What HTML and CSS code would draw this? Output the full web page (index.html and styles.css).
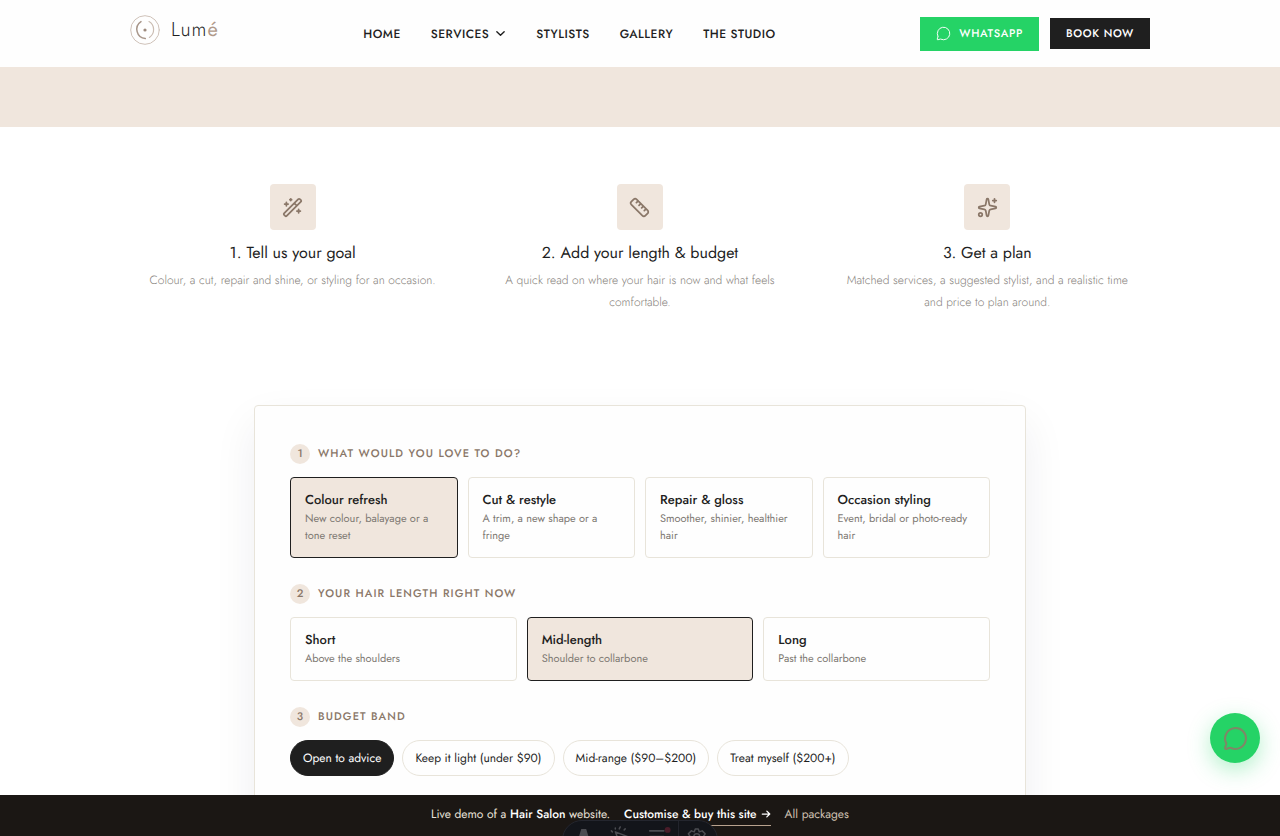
FILE: index.html
```html
<!DOCTYPE html>
<html lang="en">
<head>
<meta charset="utf-8">
<meta name="viewport" content="width=device-width, initial-scale=1">
<title>Lumé</title>
<link rel="stylesheet" href="styles.css">
</head>
<body>
<div class="shell">
  <header class="site-header">
    <div class="container header-row">
      <a class="logo" href="#">
        <svg class="logo-mark" viewBox="0 0 30 30" aria-hidden="true">
          <circle class="ring" cx="15" cy="15" r="14.3"/>
          <path class="arc-left" d="M11 6.6A9.3 9.3 0 0 0 15.3 23.6"/>
          <path class="arc-right" d="M19 6.6A9.3 9.3 0 0 1 19.4 22.4"/>
          <circle class="dot" cx="15" cy="15" r="1.6"/>
        </svg>
        <span class="logo-text">Lum<span class="accent">é</span></span>
      </a>
      <nav class="nav">
        <a href="#">HOME</a>
        <a href="#">SERVICES <svg class="chevron" viewBox="0 0 24 24" aria-hidden="true"><path d="m4 8 8 8 8-8"/></svg></a>
        <a href="#">STYLISTS</a>
        <a href="#">GALLERY</a>
        <a href="#">THE STUDIO</a>
      </nav>
      <div class="actions">
        <a class="btn btn-whatsapp" href="#"><svg class="icon-sm" viewBox="0 0 24 24" aria-hidden="true"><path d="M2.992 16.342a2 2 0 0 1 .094 1.167l-1.065 3.29a1 1 0 0 0 1.236 1.168l3.413-.998a2 2 0 0 1 1.099.092 10 10 0 1 0-4.777-4.719"/></svg>WHATSAPP</a>
        <a class="btn btn-book" href="#">BOOK NOW</a>
      </div>
    </div>
  </header>

  <main class="main">
    <div class="band"></div>
    <section class="container steps">
      <article class="step">
        <div class="step-icon"><svg viewBox="0 0 24 24" aria-hidden="true"><path d="m21.64 3.64-1.28-1.28a1.21 1.21 0 0 0-1.72 0L2.36 18.64a1.21 1.21 0 0 0 0 1.72l1.28 1.28a1.2 1.2 0 0 0 1.72 0L21.64 5.36a1.2 1.2 0 0 0 0-1.72M14 7l3 3M5 6v4M19 14v4M10 2v2M7 8H3M21 16h-4M11 3H9"/></svg></div>
        <h2>1. Tell us your goal</h2>
        <p>Colour, a cut, repair and shine, or styling for an occasion.</p>
      </article>
      <article class="step">
        <div class="step-icon"><svg viewBox="0 0 24 24" aria-hidden="true"><path d="M21.3 15.3a2.4 2.4 0 0 1 0 3.4l-2.6 2.6a2.4 2.4 0 0 1-3.4 0L2.7 8.7a2.41 2.41 0 0 1 0-3.4l2.6-2.6a2.41 2.41 0 0 1 3.4 0ZM14.5 12.5l2-2M11.5 9.5l2-2M8.5 6.5l2-2M17.5 15.5l2-2"/></svg></div>
        <h2>2. Add your length &amp; budget</h2>
        <p>A quick read on where your hair is now and what feels comfortable.</p>
      </article>
      <article class="step">
        <div class="step-icon"><svg viewBox="0 0 24 24" aria-hidden="true"><path d="M11.017 2.814a1 1 0 0 1 1.966 0l1.051 5.558a2 2 0 0 0 1.594 1.594l5.558 1.051a1 1 0 0 1 0 1.966l-5.558 1.051a2 2 0 0 0-1.594 1.594l-1.051 5.558a1 1 0 0 1-1.966 0l-1.051-5.558a2 2 0 0 0-1.594-1.594l-5.558-1.051a1 1 0 0 1 0-1.966l5.558-1.051a2 2 0 0 0 1.594-1.594zM20 2v4M22 4h-4"/><circle cx="4" cy="20" r="2"/></svg></div>
        <h2>3. Get a plan</h2>
        <p>Matched services, a suggested stylist, and a realistic time and price to plan around.</p>
      </article>
    </section>

    <section class="card">
      <div class="group" role="group" aria-labelledby="q1">
        <h3 class="label" id="q1"><span class="num">1</span>WHAT WOULD YOU LOVE TO DO?</h3>
        <div class="options four">
          <button type="button" class="option selected" aria-pressed="true"><strong>Colour refresh</strong><span>New colour, balayage or a tone reset</span></button>
          <button type="button" class="option" aria-pressed="false"><strong>Cut &amp; restyle</strong><span>A trim, a new shape or a fringe</span></button>
          <button type="button" class="option" aria-pressed="false"><strong>Repair &amp; gloss</strong><span>Smoother, shinier, healthier hair</span></button>
          <button type="button" class="option" aria-pressed="false"><strong>Occasion styling</strong><span>Event, bridal or photo-ready hair</span></button>
        </div>
      </div>
      <div class="group" role="group" aria-labelledby="q2">
        <h3 class="label" id="q2"><span class="num">2</span>YOUR HAIR LENGTH RIGHT NOW</h3>
        <div class="options three">
          <button type="button" class="option" aria-pressed="false"><strong>Short</strong><span>Above the shoulders</span></button>
          <button type="button" class="option selected" aria-pressed="true"><strong>Mid-length</strong><span>Shoulder to collarbone</span></button>
          <button type="button" class="option" aria-pressed="false"><strong>Long</strong><span>Past the collarbone</span></button>
        </div>
      </div>
      <div class="group" role="group" aria-labelledby="q3">
        <h3 class="label" id="q3"><span class="num">3</span>BUDGET BAND</h3>
        <div class="chips">
          <button type="button" class="chip active" aria-pressed="true">Open to advice</button>
          <button type="button" class="chip" aria-pressed="false">Keep it light (under $90)</button>
          <button type="button" class="chip" aria-pressed="false">Mid-range ($90–$200)</button>
          <button type="button" class="chip" aria-pressed="false">Treat myself ($200+)</button>
        </div>
      </div>
    </section>
  </main>

  <footer class="demo-bar">
    <span>Live demo of a <b>Hair Salon</b> website.</span>
    <a class="buy" href="#">Customise &amp; buy this site <svg class="arrow" viewBox="0 0 24 24" aria-hidden="true"><path d="M3 12h18M14 5l7 7-7 7"/></svg></a>
    <a class="all" href="#">All packages</a>
  </footer>

  <a class="fab" href="#" aria-label="Chat on WhatsApp"><svg viewBox="0 0 24 24" aria-hidden="true"><path d="M2.992 16.342a2 2 0 0 1 .094 1.167l-1.065 3.29a1 1 0 0 0 1.236 1.168l3.413-.998a2 2 0 0 1 1.099.092 10 10 0 1 0-4.777-4.719"/></svg></a>

  <div class="dev-toolbar" aria-hidden="true">
    <svg viewBox="0 0 156 40">
      <path class="solid" d="M18.5 8h5l4.500 15-5-2h-4l-5 2z"/>
      <path d="M53 11l13 5-6 2-2 6zM53 8V7M57 8l1-2M62 9l1-1M50 11l-1-1"/>
      <path class="bars" d="M88 10h14M88 16h14"/>
      <circle class="alert" cx="106" cy="9" r="3"/>
      <path class="divider" d="M117 0v40"/>
      <path d="M130 10l-3 3 2 3M130 10l3 1 1-3h3l1 3 3-1 3 3-2 3"/>
      <circle cx="135.5" cy="16" r="3"/>
    </svg>
  </div>
</div>
</body>
</html>
```
FILE: styles.css
```css
:root {
  --ink: #1f1f1f;
  --taupe: #8a7768;
  --sand: #f0e6dd;
  --line: #e8e4da;
  --muted: #7d7872;
  --green: #25d366;
}

* { box-sizing: border-box; }

body {
  margin: 0;
  background: #fff;
  color: var(--ink);
  font-family: Jost, Lato, sans-serif;
  font-size: 12px;
  text-rendering: geometricPrecision;
}

a { color: inherit; text-decoration: none; }
h2, h3, p { margin: 0; }
button { font: inherit; color: inherit; text-rendering: inherit; cursor: pointer; }

svg {
  flex: none;
  fill: none;
  stroke: currentColor;
  stroke-width: 2;
  stroke-linecap: round;
  stroke-linejoin: round;
}

.shell {
  position: relative;
  display: flex;
  flex-direction: column;
  height: 100vh;
  overflow: hidden;
}

.container {
  width: calc(100% - 48px);
  max-width: 1020px;
  margin: 0 auto;
}

.site-header { flex: none; background: #fefefe; }

.header-row {
  display: flex;
  align-items: center;
  justify-content: space-between;
  height: 67px;
}

.logo {
  display: flex;
  align-items: center;
  gap: 11px;
  margin-bottom: 8px;
}
.logo-mark { width: 30px; height: 30px; }
.ring { stroke: #cfc2b9; stroke-width: 1; }
.arc-left { stroke: #a8968a; stroke-width: 1.5; }
.arc-right { stroke: #cbbdb3; stroke-width: 1.2; }
.dot { fill: #9d8a7d; stroke: none; }
.logo-text { font-size: 20px; font-weight: 300; letter-spacing: 1px; line-height: 24px; }
.accent { color: #b09a8b; font-weight: 400; }

.nav {
  display: flex;
  gap: 30px;
  font-weight: 500;
  letter-spacing: .04em;
}
.nav a { display: flex; align-items: center; gap: 6px; }
.chevron { width: 11px; height: 11px; stroke-width: 3; }

.actions { display: flex; align-items: center; gap: 11px; }

.btn {
  display: flex;
  align-items: center;
  gap: 8px;
  padding: 0 16px;
  color: #fff;
  font-size: 11px;
  font-weight: 500;
  letter-spacing: .06em;
}
.btn-whatsapp { height: 34px; background: var(--green); }
.btn-book { height: 31px; background: var(--ink); }
.icon-sm { width: 15px; height: 15px; stroke-width: 1.5; }

.main {
  flex: 1;
  min-height: 0;
  overflow-y: auto;
  scrollbar-width: none;
}

.band { height: 60px; background: var(--sand); }

.steps {
  display: grid;
  grid-template-columns: repeat(3, 1fr);
  gap: 22px;
  padding: 57px 0 92px;
  text-align: center;
}

.step-icon {
  display: grid;
  place-items: center;
  width: 46px;
  height: 46px;
  margin: 0 auto 12px;
  border-radius: 4px;
  background: var(--sand);
  color: var(--taupe);
}
.step-icon svg { width: 21px; height: 21px; }
.step h2 { margin-bottom: 3px; font-size: 16px; font-weight: 400; line-height: 24px; }
.step p { padding: 0 12px; color: #85807a; font-weight: 300; line-height: 22px; }

.card {
  display: flex;
  flex-direction: column;
  gap: 26px;
  width: calc(100% - 48px);
  max-width: 772px;
  margin: 0 auto;
  padding: 38px 35px 80px;
  border: 1px solid var(--line);
  border-radius: 4px;
  background: #fefefe;
  box-shadow: 0 18px 44px rgba(31, 31, 50, .07);
}

.label {
  display: flex;
  align-items: center;
  gap: 8px;
  margin-bottom: 13px;
  color: var(--taupe);
  font-size: 11px;
  font-weight: 500;
  line-height: 20px;
  letter-spacing: .1em;
}
.num {
  width: 20px;
  border-radius: 50%;
  background: var(--sand);
  letter-spacing: 0;
  text-align: center;
}

.options { display: grid; gap: 10px; }
.four { grid-template-columns: repeat(4, 1fr); }
.three { grid-template-columns: repeat(3, 1fr); }

.option {
  display: flex;
  flex-direction: column;
  gap: 1px;
  padding: 12px 13px 12px 14px;
  border: 1px solid var(--line);
  border-radius: 4px;
  background: #fefefe;
  text-align: left;
}
.option strong { font-size: 13px; font-weight: 500; line-height: 20px; }
.option span { color: var(--muted); font-size: 11px; line-height: 17px; }
.option.selected { border-color: var(--ink); background: var(--sand); }

.chips { display: flex; flex-wrap: wrap; gap: 8px; }
.chip {
  height: 36px;
  padding: 0 12px;
  border: 1px solid var(--line);
  border-radius: 18px;
  background: #fefefe;
}
.chip.active { border-color: var(--ink); background: var(--ink); color: #fff; }

.demo-bar {
  display: flex;
  flex: none;
  align-items: flex-start;
  justify-content: center;
  gap: 14px;
  height: 41px;
  padding-top: 9px;
  background: #1b1714;
  color: #e9e2da;
  line-height: 20px;
}
.demo-bar b { color: #fff; font-weight: 500; }
.buy {
  display: flex;
  align-items: center;
  gap: 4px;
  padding-bottom: 1px;
  border-bottom: 1px solid #b8a28e;
  color: #fff;
  font-weight: 500;
}
.arrow { width: 10px; height: 10px; stroke-width: 3; }
.all { color: #cfc0b1; }

.fab {
  position: absolute;
  right: 20px;
  bottom: 73px;
  display: grid;
  place-items: center;
  width: 50px;
  height: 50px;
  border-radius: 50%;
  background: var(--green);
  box-shadow: 0 7px 22px rgba(37, 211, 102, .35);
  color: #7f8767;
}
.fab svg { width: 25px; height: 25px; }

.dev-toolbar {
  position: absolute;
  top: calc(100% - 16px);
  left: 50%;
  width: 156px;
  height: 40px;
  border: 1px solid #24262e;
  border-radius: 20px;
  background: #13151a;
  color: #4b4c51;
  transform: translateX(-50%);
}
.dev-toolbar svg { display: block; width: 100%; stroke-width: 1.5; }
.dev-toolbar .solid { fill: currentColor; stroke: none; }
.dev-toolbar .bars { stroke-width: 2; }
.dev-toolbar .alert { fill: #4a1c29; stroke: none; }
.dev-toolbar .divider { stroke: #24262e; stroke-width: 1; }
```
